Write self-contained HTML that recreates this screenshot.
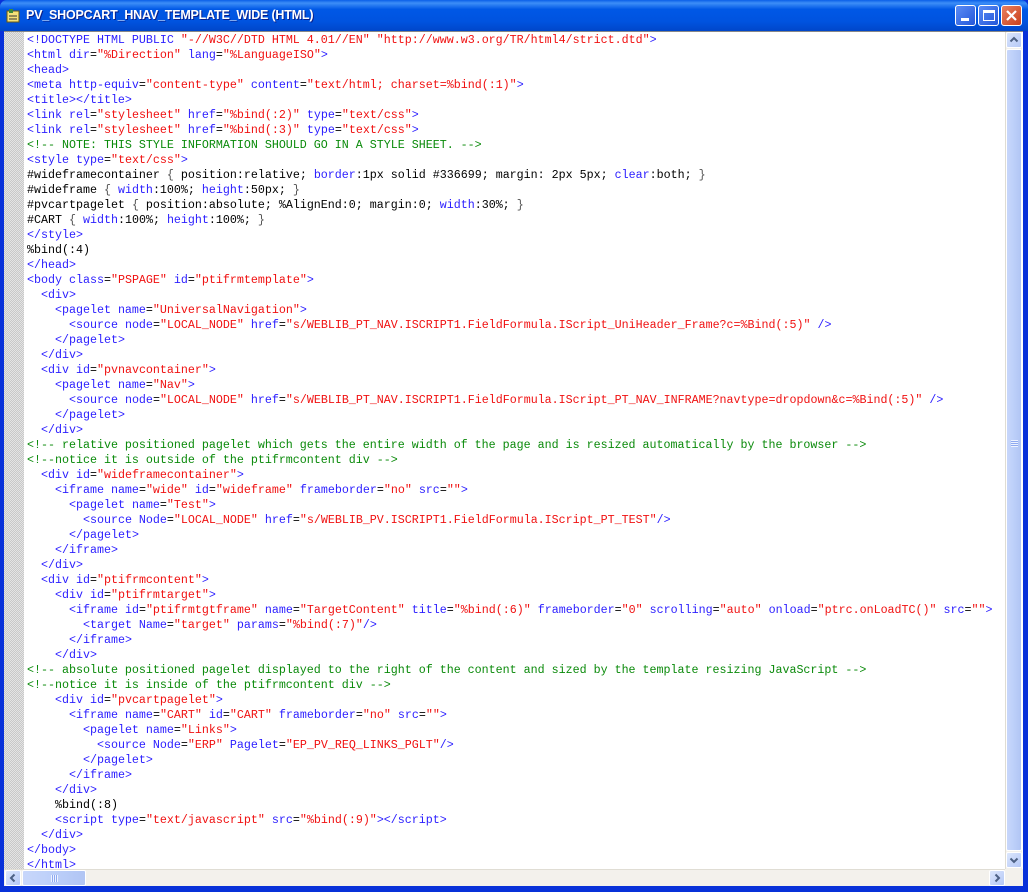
<!DOCTYPE html>
<html><head><meta charset="utf-8"><style>
*{margin:0;padding:0;box-sizing:border-box}
body{width:1028px;height:892px;overflow:hidden;background:#0831d9;position:relative;font-family:"Liberation Sans",sans-serif}
.title{position:absolute;left:0;top:0;width:1028px;height:31px;background:linear-gradient(#0a5fe8 0%,#3d8ef7 10%,#0058e6 30%,#0053df 70%,#0046c9 100%);border-radius:7px 7px 0 0}
.ttext{position:absolute;left:26px;top:8px;color:#fff;font-weight:bold;font-size:12.5px;letter-spacing:-0.2px;text-shadow:1px 1px #0a1f8a}
.icon{position:absolute;left:6px;top:8px;width:15px;height:15px}
.btn{position:absolute;top:5px;width:21px;height:21px;border:1px solid #fff;border-radius:3px;background:linear-gradient(135deg,#5b8cf5,#2457d9)}
.btn.x{background:linear-gradient(135deg,#e9805f,#c9401c)}
.client{position:absolute;left:4px;top:31px;width:1019px;height:855px;background:#fff;border-top:1px solid #888}
.gutter{position:absolute;left:4px;top:32px;width:21px;height:837px;background-color:#e4e4e4;background-image:linear-gradient(45deg,#c8c8c8 25%,transparent 25%,transparent 75%,#c8c8c8 75%),linear-gradient(45deg,#c8c8c8 25%,transparent 25%,transparent 75%,#c8c8c8 75%);background-size:2px 2px;background-position:0 0,1px 1px;border-right:1px solid #fff}
pre{position:absolute;left:27px;top:33px;font-family:"Liberation Mono",monospace;font-size:11.67px;line-height:15px;color:#000;white-space:pre}
.t{color:#2a1dff}.v{color:#f01010}.c{color:#0a8a0a}.b{color:#555}
.vs{position:absolute;left:1005px;top:32px;width:17px;height:837px;background:#f3f1ec;border-left:1px solid #e0ddd4}
.sbtn{position:absolute;width:16px;height:16px;border:1px solid #fff;border-radius:2px;background:linear-gradient(135deg,#dbe6fd,#b5c8f6)}
.sbtn svg{position:absolute;left:0;top:0}
.thumb{position:absolute;border:1px solid #fff;border-radius:2px;background:linear-gradient(90deg,#c8d7fb,#bccff9 50%,#b1c5f4)}
.hs{position:absolute;left:4px;top:869px;width:1001px;height:17px;background:#f3f1ec;border-top:1px solid #e0ddd4}
</style></head><body>
<div class="title">
<svg class="icon" viewBox="0 0 15 15"><rect x="1" y="3" width="12" height="11" fill="#f4e27a" stroke="#6b5a10"/><rect x="3" y="1" width="4" height="4" fill="#3a8a3a"/><line x1="3" y1="8" x2="11" y2="8" stroke="#333"/><line x1="3" y1="11" x2="11" y2="11" stroke="#333"/></svg>
<div class="ttext">PV_SHOPCART_HNAV_TEMPLATE_WIDE (HTML)</div>
<div class="btn" style="left:955px"><div style="position:absolute;left:5px;top:12px;width:8px;height:3px;background:#fff"></div></div>
<div class="btn" style="left:978px"><div style="position:absolute;left:4px;top:4px;width:12px;height:11px;border:1px solid #fff;border-top-width:3px"></div></div>
<div class="btn x" style="left:1001px"><svg width="21" height="21" viewBox="0 0 21 21" style="position:absolute;left:-1px;top:-1px"><path d="M6 6L15 15M15 6L6 15" stroke="#fff" stroke-width="2.2"/></svg></div>
</div>
<div class="client"></div>
<div class="gutter"></div>
<pre><span class="t">&lt;!DOCTYPE HTML PUBLIC </span><span class="v">"-//W3C//DTD HTML 4.01//EN"</span> <span class="v">"http://www.w3.org/TR/html4/strict.dtd"</span><span class="t">&gt;</span>
<span class="t">&lt;html dir</span>=<span class="v">"%Direction"</span> <span class="t">lang</span>=<span class="v">"%LanguageISO"</span><span class="t">&gt;</span>
<span class="t">&lt;head&gt;</span>
<span class="t">&lt;meta http-equiv</span>=<span class="v">"content-type"</span> <span class="t">content</span>=<span class="v">"text/html; charset=%bind(:1)"</span><span class="t">&gt;</span>
<span class="t">&lt;title&gt;&lt;/title&gt;</span>
<span class="t">&lt;link rel</span>=<span class="v">"stylesheet"</span> <span class="t">href</span>=<span class="v">"%bind(:2)"</span> <span class="t">type</span>=<span class="v">"text/css"</span><span class="t">&gt;</span>
<span class="t">&lt;link rel</span>=<span class="v">"stylesheet"</span> <span class="t">href</span>=<span class="v">"%bind(:3)"</span> <span class="t">type</span>=<span class="v">"text/css"</span><span class="t">&gt;</span>
<span class="c">&lt;!-- NOTE: THIS STYLE INFORMATION SHOULD GO IN A STYLE SHEET. --&gt;</span>
<span class="t">&lt;style type</span>=<span class="v">"text/css"</span><span class="t">&gt;</span>
#wideframecontainer <span class="b">{</span> position:relative; <span class="t">border</span>:1px solid #336699; margin: 2px 5px; <span class="t">clear</span>:both; <span class="b">}</span>
#wideframe <span class="b">{</span> <span class="t">width</span>:100%; <span class="t">height</span>:50px; <span class="b">}</span>
#pvcartpagelet <span class="b">{</span> position:absolute; %AlignEnd:0; margin:0; <span class="t">width</span>:30%; <span class="b">}</span>
#CART <span class="b">{</span> <span class="t">width</span>:100%; <span class="t">height</span>:100%; <span class="b">}</span>
<span class="t">&lt;/style&gt;</span>
%bind(:4)
<span class="t">&lt;/head&gt;</span>
<span class="t">&lt;body class</span>=<span class="v">"PSPAGE"</span> <span class="t">id</span>=<span class="v">"ptifrmtemplate"</span><span class="t">&gt;</span>
  <span class="t">&lt;div&gt;</span>
    <span class="t">&lt;pagelet name</span>=<span class="v">"UniversalNavigation"</span><span class="t">&gt;</span>
      <span class="t">&lt;source node</span>=<span class="v">"LOCAL_NODE"</span> <span class="t">href</span>=<span class="v">"s/WEBLIB_PT_NAV.ISCRIPT1.FieldFormula.IScript_UniHeader_Frame?c=%Bind(:5)"</span> <span class="t">/&gt;</span>
    <span class="t">&lt;/pagelet&gt;</span>
  <span class="t">&lt;/div&gt;</span>
  <span class="t">&lt;div id</span>=<span class="v">"pvnavcontainer"</span><span class="t">&gt;</span>
    <span class="t">&lt;pagelet name</span>=<span class="v">"Nav"</span><span class="t">&gt;</span>
      <span class="t">&lt;source node</span>=<span class="v">"LOCAL_NODE"</span> <span class="t">href</span>=<span class="v">"s/WEBLIB_PT_NAV.ISCRIPT1.FieldFormula.IScript_PT_NAV_INFRAME?navtype=dropdown&amp;c=%Bind(:5)"</span> <span class="t">/&gt;</span>
    <span class="t">&lt;/pagelet&gt;</span>
  <span class="t">&lt;/div&gt;</span>
<span class="c">&lt;!-- relative positioned pagelet which gets the entire width of the page and is resized automatically by the browser --&gt;</span>
<span class="c">&lt;!--notice it is outside of the ptifrmcontent div --&gt;</span>
  <span class="t">&lt;div id</span>=<span class="v">"wideframecontainer"</span><span class="t">&gt;</span>
    <span class="t">&lt;iframe name</span>=<span class="v">"wide"</span> <span class="t">id</span>=<span class="v">"wideframe"</span> <span class="t">frameborder</span>=<span class="v">"no"</span> <span class="t">src</span>=<span class="v">""</span><span class="t">&gt;</span>
      <span class="t">&lt;pagelet name</span>=<span class="v">"Test"</span><span class="t">&gt;</span>
        <span class="t">&lt;source Node</span>=<span class="v">"LOCAL_NODE"</span> <span class="t">href</span>=<span class="v">"s/WEBLIB_PV.ISCRIPT1.FieldFormula.IScript_PT_TEST"</span><span class="t">/&gt;</span>
      <span class="t">&lt;/pagelet&gt;</span>
    <span class="t">&lt;/iframe&gt;</span>
  <span class="t">&lt;/div&gt;</span>
  <span class="t">&lt;div id</span>=<span class="v">"ptifrmcontent"</span><span class="t">&gt;</span>
    <span class="t">&lt;div id</span>=<span class="v">"ptifrmtarget"</span><span class="t">&gt;</span>
      <span class="t">&lt;iframe id</span>=<span class="v">"ptifrmtgtframe"</span> <span class="t">name</span>=<span class="v">"TargetContent"</span> <span class="t">title</span>=<span class="v">"%bind(:6)"</span> <span class="t">frameborder</span>=<span class="v">"0"</span> <span class="t">scrolling</span>=<span class="v">"auto"</span> <span class="t">onload</span>=<span class="v">"ptrc.onLoadTC()"</span> <span class="t">src</span>=<span class="v">""</span><span class="t">&gt;</span>
        <span class="t">&lt;target Name</span>=<span class="v">"target"</span> <span class="t">params</span>=<span class="v">"%bind(:7)"</span><span class="t">/&gt;</span>
      <span class="t">&lt;/iframe&gt;</span>
    <span class="t">&lt;/div&gt;</span>
<span class="c">&lt;!-- absolute positioned pagelet displayed to the right of the content and sized by the template resizing JavaScript --&gt;</span>
<span class="c">&lt;!--notice it is inside of the ptifrmcontent div --&gt;</span>
    <span class="t">&lt;div id</span>=<span class="v">"pvcartpagelet"</span><span class="t">&gt;</span>
      <span class="t">&lt;iframe name</span>=<span class="v">"CART"</span> <span class="t">id</span>=<span class="v">"CART"</span> <span class="t">frameborder</span>=<span class="v">"no"</span> <span class="t">src</span>=<span class="v">""</span><span class="t">&gt;</span>
        <span class="t">&lt;pagelet name</span>=<span class="v">"Links"</span><span class="t">&gt;</span>
          <span class="t">&lt;source Node</span>=<span class="v">"ERP"</span> <span class="t">Pagelet</span>=<span class="v">"EP_PV_REQ_LINKS_PGLT"</span><span class="t">/&gt;</span>
        <span class="t">&lt;/pagelet&gt;</span>
      <span class="t">&lt;/iframe&gt;</span>
    <span class="t">&lt;/div&gt;</span>
    %bind(:8)
    <span class="t">&lt;script type</span>=<span class="v">"text/javascript"</span> <span class="t">src</span>=<span class="v">"%bind(:9)"</span><span class="t">&gt;&lt;/script&gt;</span>
  <span class="t">&lt;/div&gt;</span>
<span class="t">&lt;/body&gt;</span>
<span class="t">&lt;/html&gt;</span></pre>
<div class="vs">
<div class="sbtn" style="left:0;top:0"><svg width="14" height="14" viewBox="0 0 14 14"><path d="M3.5 8.5L7 5L10.5 8.5" stroke="#4d6185" stroke-width="2" fill="none"/></svg></div>
<div class="thumb" style="left:0;top:17px;width:16px;height:802px"><div style="position:absolute;left:4px;top:390px;width:7px;height:7px;background:repeating-linear-gradient(#eef3ff 0 1px,#8faaf0 1px 2px)"></div></div>
<div class="sbtn" style="left:0;top:820px"><svg width="14" height="14" viewBox="0 0 14 14"><path d="M3.5 5.5L7 9L10.5 5.5" stroke="#4d6185" stroke-width="2" fill="none"/></svg></div>
</div>
<div class="hs">
<div class="sbtn" style="left:1px;top:0"><svg width="14" height="14" viewBox="0 0 14 14"><path d="M8.5 3.5L5 7L8.5 10.5" stroke="#4d6185" stroke-width="2" fill="none"/></svg></div>
<div class="thumb" style="left:18px;top:0;width:64px;height:16px"><div style="position:absolute;left:28px;top:4px;width:7px;height:7px;background:repeating-linear-gradient(90deg,#eef3ff 0 1px,#8faaf0 1px 2px)"></div></div>
<div class="sbtn" style="left:985px;top:0"><svg width="14" height="14" viewBox="0 0 14 14"><path d="M5.5 3.5L9 7L5.5 10.5" stroke="#4d6185" stroke-width="2" fill="none"/></svg></div>
</div>
<div style="position:absolute;left:1005px;top:869px;width:18px;height:17px;background:#f3f1ec"></div>
</body></html>
